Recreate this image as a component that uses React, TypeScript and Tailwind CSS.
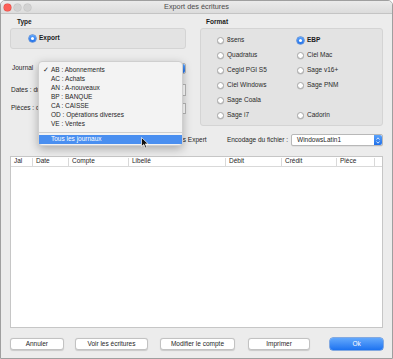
import React from "react";

const journaux = [
  "AB : Abonnements",
  "AC : Achats",
  "AN : A-nouveaux",
  "BP : BANQUE",
  "CA : CAISSE",
  "OD : Opérations diverses",
  "VE : Ventes",
];

const formats: [string, string | null][] = [
  ["8sens", "EBP"],
  ["Quadratus", "Ciel Mac"],
  ["Cegid PGI S5", "Sage v16+"],
  ["Ciel Windows", "Sage PNM"],
  ["Sage Coala", null],
  ["Sage i7", "Cadorin"],
];

const columns = [
  { label: "Jal", w: "w-[22px]" },
  { label: "Date", w: "w-[36px]" },
  { label: "Compte", w: "w-[60px]" },
  { label: "Libellé", w: "w-[97px]" },
  { label: "Débit", w: "w-[56px]" },
  { label: "Crédit", w: "w-[55px]" },
  { label: "Pièce", w: "w-[38px]" },
];

function Radio({ label, checked }: { label: string; checked?: boolean }) {
  return (
    <div className="flex h-[15px] items-center gap-[3px]">
      {checked ? (
        <span className="flex h-[7px] w-[7px] items-center justify-center rounded-full bg-gradient-to-b from-[#5aa2fb] to-[#1f6fe8] shadow-[0_0_0_0.5px_#1c64d0]">
          <span className="h-[3px] w-[3px] rounded-full bg-white" />
        </span>
      ) : (
        <span className="h-[7px] w-[7px] rounded-full border-[0.5px] border-[#a9a9a9] bg-white shadow-[0_0.5px_0.5px_rgba(0,0,0,0.15)]" />
      )}
      <span className={checked ? "font-bold text-[#1a1a1a]" : "text-[#2a2a2a]"}>{label}</span>
    </div>
  );
}

function Stepper() {
  return (
    <span className="flex h-full w-[8px] flex-col items-center justify-center gap-[1px] rounded-r-[2px] bg-gradient-to-b from-[#5aa2fb] to-[#1f6fe8]">
      <svg width="4" height="3" viewBox="0 0 4 3">
        <path d="M0.5 2.5 L2 0.8 L3.5 2.5" fill="none" stroke="white" strokeWidth="0.8" />
      </svg>
      <svg width="4" height="3" viewBox="0 0 4 3">
        <path d="M0.5 0.5 L2 2.2 L3.5 0.5" fill="none" stroke="white" strokeWidth="0.8" />
      </svg>
    </span>
  );
}

function Field({ w }: { w: string }) {
  return <span className={`h-full ${w} border-[0.5px] border-[#b8b8b8] bg-white`} />;
}

export default function App() {
  return (
    <div className="relative h-[359px] w-[393px] overflow-hidden rounded-t-[5px] border-[0.5px] border-[#9f9f9f] bg-[#ececec] font-['Liberation_Sans',Arial,sans-serif] text-[6.5px] leading-none text-[#262626]">
      {/* title bar */}
      <div className="relative flex h-[13px] items-center justify-center border-b-[0.5px] border-[#c4c4c4] bg-gradient-to-b from-[#ebebeb] to-[#dcdcdc]">
        <div className="absolute left-[3px] top-[3px] flex gap-[3px]">
          <span className="h-[7px] w-[7px] rounded-full bg-[#fc5f57] shadow-[0_0_0_0.5px_#df4a42]" />
          <span className="h-[7px] w-[7px] rounded-full bg-[#d2d2d2] shadow-[0_0_0_0.5px_#c0c0c0]" />
          <span className="h-[7px] w-[7px] rounded-full bg-[#d2d2d2] shadow-[0_0_0_0.5px_#c0c0c0]" />
        </div>
        <span className="text-[7.3px] text-[#4a4a4a]">Export des écritures</span>
      </div>

      <div className="px-[9px]">
        <div className="flex">
          {/* left column */}
          <div className="w-[177px]">
            <div className="mt-[5px] h-[9px] pl-[7px] font-bold text-[#1a1a1a]">Type</div>
            <div className="flex h-[21px] items-center rounded-[3px] border-[0.5px] border-[#d4d4d4] bg-[#e3e3e3] pl-[18px]">
              <Radio label="Export" checked />
            </div>

            <div className="mt-[14px] flex h-[11px] items-center">
              <span className="w-[36px] pl-[2px]">Journal</span>
              <div className="flex h-full flex-1 items-center justify-end rounded-[2px] border-[0.5px] border-[#b8b8b8] bg-white">
                <Stepper />
              </div>
            </div>
            <div className="mt-[10px] flex h-[12px] items-center gap-[3px]">
              <span className="pl-[1px]">Dates : du</span>
              <Field w="w-[50px]" />
              <Field w="flex-1" />
            </div>
            <div className="mt-[7px] flex h-[11px] items-center gap-[3px]">
              <span className="pl-[1px]">Pièces : de</span>
              <Field w="w-[50px]" />
              <Field w="flex-1" />
            </div>
          </div>

          {/* right column */}
          <div className="ml-[14px] w-[184px]">
            <div className="mt-[5px] h-[9px] pl-[6px] font-bold text-[#1a1a1a]">Format</div>
            <div className="grid h-[98px] grid-cols-[80px_1fr] content-start rounded-[3px] border-[0.5px] border-[#d4d4d4] bg-[#e3e3e3] pl-[16px] pt-[4px]">
              {formats.map(([a, b]) => (
                <React.Fragment key={a}>
                  <Radio label={a} />
                  {b ? <Radio label={b} checked={b === "EBP"} /> : <div className="h-[15px]" />}
                </React.Fragment>
              ))}
            </div>
          </div>
        </div>

        {/* encoding row */}
        <div className="mt-[8px] flex h-[12px] items-center">
          <div className="ml-[144px] flex items-center gap-[3px]">
            <span className="h-[7px] w-[7px] rounded-[1.5px] border-[0.5px] border-[#a9a9a9] bg-white" />
            <span>Exports Expert</span>
          </div>
          <div className="ml-auto flex h-full items-center gap-[3px]">
            <span>Encodage du fichier :</span>
            <div className="flex h-full w-[92px] items-center rounded-[2px] border-[0.5px] border-[#b8b8b8] bg-white pl-[5px] shadow-[0_0.5px_0.5px_rgba(0,0,0,0.1)]">
              <span className="flex-1">WindowsLatin1</span>
              <Stepper />
            </div>
          </div>
        </div>

        {/* table */}
        <div className="mt-[10px] h-[172px] border-[0.5px] border-[#c6c6c6] bg-white">
          <div className="flex h-[10px] items-center border-b-[0.5px] border-[#d9d9d9]">
            {columns.map((c) => (
              <div key={c.label} className={`${c.w} flex h-[8px] items-center border-r-[0.5px] border-[#d9d9d9] pl-[3px]`}>
                {c.label}
              </div>
            ))}
          </div>
        </div>

        {/* buttons */}
        <div className="mt-[10px] flex h-[12px]">
          <button className="w-[54px] rounded-[3px] border-[0.5px] border-[#c2c2c2] bg-white shadow-[0_0.5px_1px_rgba(0,0,0,0.15)]">Annuler</button>
          <button className="ml-[11px] w-[74px] rounded-[3px] border-[0.5px] border-[#c2c2c2] bg-white shadow-[0_0.5px_1px_rgba(0,0,0,0.15)]">Voir les écritures</button>
          <button className="ml-[12px] w-[75px] rounded-[3px] border-[0.5px] border-[#c2c2c2] bg-white shadow-[0_0.5px_1px_rgba(0,0,0,0.15)]">Modifier le compte</button>
          <button className="ml-[13px] w-[63px] rounded-[3px] border-[0.5px] border-[#c2c2c2] bg-white shadow-[0_0.5px_1px_rgba(0,0,0,0.15)]">Imprimer</button>
          <button className="ml-[20px] w-[53px] rounded-[3px] bg-gradient-to-b from-[#62a8fc] to-[#1b72f0] text-white shadow-[0_0_0_0.5px_#1a66d6]">Ok</button>
        </div>
      </div>

      {/* open journal menu */}
      <div className="absolute left-[37px] top-[60px] w-[145px] rounded-[4px] border-[0.5px] border-[#cfcfcf] bg-[#f3f3f3] pb-[1px] pt-[4px] shadow-[0_3px_10px_rgba(0,0,0,0.28)]">
        {journaux.map((j, i) => (
          <div key={j} className="flex h-[9px] items-center">
            <span className="w-[12px] pl-[4px]">{i === 0 ? "✓" : ""}</span>
            <span>{j}</span>
          </div>
        ))}
        <div className="flex h-[6px] items-center">
          <div className="h-[0.5px] w-full bg-[#cfcfcf]" />
        </div>
        <div className="flex h-[9px] items-center bg-[#4a8ff0] pl-[12px] text-white">Tous les journaux</div>
      </div>

      {/* mouse cursor */}
      <svg className="absolute left-[140px] top-[136px]" width="8" height="12" viewBox="0 0 8 12">
        <path d="M0.5 0.5 L0.5 9.5 L2.8 7.4 L4.4 11 L5.8 10.4 L4.3 6.9 L7.2 6.9 Z" fill="#111" stroke="white" strokeWidth="0.7" />
      </svg>
    </div>
  );
}
